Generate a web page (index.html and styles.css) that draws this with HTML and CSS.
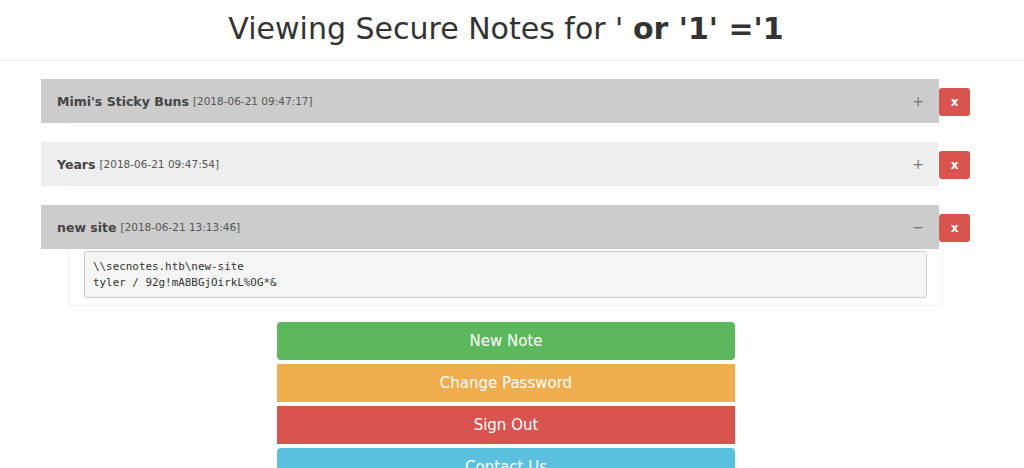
FILE: index.html
```html
<!DOCTYPE html>
<html>
<head>
<meta charset="utf-8">
<link rel="stylesheet" href="styles.css">
</head>
<body>
<header class="top">
  <h1 class="title">Viewing Secure Notes for ' <strong>or '1' ='1</strong></h1>
</header>
<main class="notes">
  <div class="note">
    <div class="panel">
      <div class="panel-head dark">
        <span class="name">Mimi's Sticky Buns</span> <span class="date">[2018-06-21 09:47:17]</span>
        <span class="toggle">+</span>
      </div>
      <div class="panel-body collapsed"></div>
    </div>
    <button class="del">x</button>
  </div>
  <div class="note">
    <div class="panel">
      <div class="panel-head light">
        <span class="name">Years</span> <span class="date">[2018-06-21 09:47:54]</span>
        <span class="toggle">+</span>
      </div>
      <div class="panel-body collapsed"></div>
    </div>
    <button class="del">x</button>
  </div>
  <div class="note">
    <div class="panel">
      <div class="panel-head dark">
        <span class="name">new site</span> <span class="date">[2018-06-21 13:13:46]</span>
        <span class="toggle">&minus;</span>
      </div>
      <div class="panel-body open">
        <pre class="content">\\secnotes.htb\new-site
tyler / 92g!mA8BGjOirkL%OG*&amp;</pre>
      </div>
    </div>
    <button class="del">x</button>
  </div>
</main>
<nav class="actions">
  <a class="btn green">New Note</a>
  <a class="btn orange">Change Password</a>
  <a class="btn red">Sign Out</a>
  <a class="btn blue">Contact Us</a>
</nav>
</body>
</html>
```
FILE: styles.css
```css
html, body {
  margin: 0;
  padding: 0;
  background: #fff;
  font-family: "DejaVu Sans", sans-serif;
  color: #333;
}
.top {
  height: 60px;
  border-bottom: 1px solid #eee;
  background: #fff;
  display: flex;
  align-items: center;
  justify-content: center;
}
.title {
  margin: -3px 12px 0 0;
  font-size: 30px;
  font-weight: normal;
  color: #333;
}
.title strong { font-weight: bold; }
.notes {
  padding: 18px 0 0 41px;
  display: flex;
  flex-direction: column;
  gap: 16px;
}
.note {
  display: flex;
  align-items: flex-start;
}
.panel {
  width: 898px;
}
.panel-head {
  height: 44px;
  box-sizing: border-box;
  padding: 0 15px 0 16px;
  display: flex;
  align-items: center;
  gap: 4px;
}
.panel-head.dark { background: #cccccc; }
.panel-head.light { background: #eeeeee; }
.name {
  font-weight: bold;
  font-size: 12.5px;
  color: #444;
}
.date {
  font-size: 10.5px;
  color: #555;
}
.toggle {
  margin-left: auto;
  font-size: 14px;
  color: #777;
}
.panel-body {
  margin-left: 27px;
  margin-right: -4px;
  border: 1px solid #f3f3f3;
  border-top: none;
  border-radius: 0 0 3px 3px;
}
.panel-body.collapsed { height: 2px; }
.panel-body.open {
  padding: 2px 15px 7px 15px;
}
.content {
  margin: 0;
  padding: 7px 8px 6px 8px;
  background: #f5f5f5;
  border: 1px solid #cccccc;
  border-radius: 3px;
  font-family: "DejaVu Sans Mono", monospace;
  font-size: 10.9px;
  line-height: 16px;
  color: #333;
}
.del {
  margin-top: 9px;
  width: 31px;
  height: 28px;
  border: none;
  border-radius: 3px;
  background: #d9534f;
  color: #fff;
  font-family: "DejaVu Sans", sans-serif;
  font-weight: bold;
  font-size: 12px;
  padding: 0;
}
.actions {
  width: 458px;
  margin: 16px 0 0 277px;
  display: flex;
  flex-direction: column;
  gap: 4px;
}
.btn {
  display: flex;
  align-items: center;
  justify-content: center;
  height: 38px;
  color: #fff;
  font-size: 15px;
}
.btn.green { background: #5cb85c; border-radius: 4px; }
.btn.orange { background: #f0ad4e; }
.btn.red { background: #d9534f; }
.btn.blue { background: #5bc0de; border-radius: 4px 4px 0 0; }
```
